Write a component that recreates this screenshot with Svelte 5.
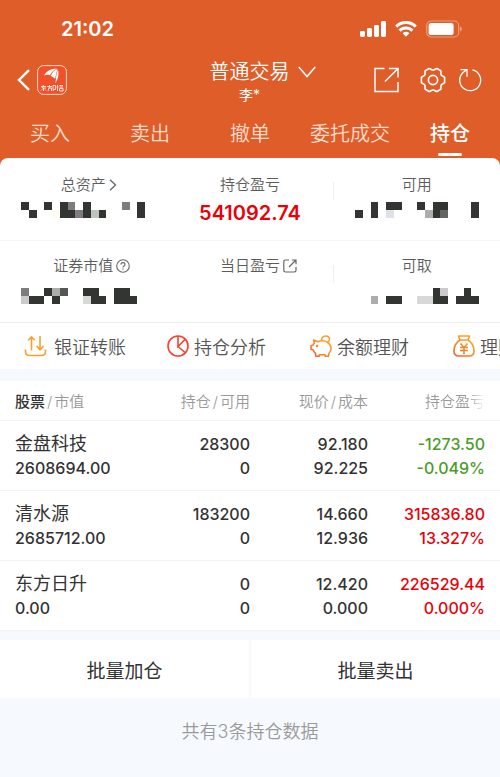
<script lang="ts">
  type Cell = [col: number, row: number, color: string];

  type Holding = {
    name: string;
    value: string;
    amount: string;
    usable: string;
    price: string;
    cost: string;
    profit: string;
    percent: string;
  };

  const D = "#323532";

  const masks: Record<string, Cell[]> = {
    total: [
      [0, 0, D], [3, 0, D], [5, 0, D], [6, 0, "#7f7c80"], [8, 0, D], [13, 0, "#7f7c80"], [15, 0, D],
      [1, 1, D], [4, 1, "#fffaf2"], [5, 1, D], [6, 1, D], [7, 1, "#7f7c80"], [8, 1, D],
      [9, 1, "#bcc4bd"], [10, 1, D], [15, 1, D],
    ],
    usable: [
      [2, 0, D], [4, 0, D], [5, 0, D], [8, 0, D], [10, 0, D], [11, 0, D], [15, 0, D],
      [0, 1, D], [2, 1, D], [4, 1, "#dde2e7"], [9, 1, "#adadad"], [10, 1, D], [11, 1, "#636563"], [15, 1, D],
    ],
    market: [
      [0, 0, "#7f7c80"], [3, 0, D], [4, 0, "#adadad"], [5, 0, "#555755"], [8, 0, D], [9, 0, D],
      [12, 0, D], [13, 0, D],
      [0, 1, "#cdcace"], [1, 1, D], [2, 1, D], [4, 1, D], [8, 1, "#d8d8d8"], [9, 1, D], [10, 1, D],
      [12, 1, D], [13, 1, D], [14, 1, D],
    ],
    cash: [
      [10, 0, D], [11, 0, "#cdcace"], [14, 0, D],
      [2, 1, "#adadad"], [4, 1, D], [5, 1, D], [8, 1, "#d8d8d8"], [9, 1, "#d8d8d8"], [10, 1, D],
      [11, 1, D], [13, 1, D], [14, 1, D], [15, 1, D],
    ],
  };

  const tabs = ["买入", "卖出", "撤单", "委托成交", "持仓"];
  let active = $state("持仓");

  const holdings: Holding[] = [
    { name: "金盘科技", value: "2608694.00", amount: "28300", usable: "0", price: "92.180", cost: "92.225", profit: "-1273.50", percent: "-0.049%" },
    { name: "清水源", value: "2685712.00", amount: "183200", usable: "0", price: "14.660", cost: "12.936", profit: "315836.80", percent: "13.327%" },
    { name: "东方日升", value: "0.00", amount: "0", usable: "0", price: "12.420", cost: "0.000", profit: "226529.44", percent: "0.000%" },
  ];
</script>

{#snippet mask(cells: Cell[])}
  <svg class="mask" viewBox="0 0 16 2" preserveAspectRatio="none" shape-rendering="crispEdges" aria-hidden="true">
    {#each cells as [col, row, color]}
      <rect x={col} y={row} width="1" height="1" fill={color} />
    {/each}
  </svg>
{/snippet}

<div class="app">
  <header>
    <div class="status">
      <span class="time">21:02</span>
      <div class="signals">
        <svg width="26" height="16" viewBox="0 0 26 16" fill="#fff">
          <rect x="0" y="10" width="5" height="6" rx="1.4" />
          <rect x="7" y="7" width="5" height="9" rx="1.4" />
          <rect x="14" y="4" width="5" height="12" rx="1.4" />
          <rect x="21" y="0" width="5" height="16" rx="1.4" />
        </svg>
        <svg width="22" height="16" viewBox="0 0 22 16" fill="none" stroke="#fff" stroke-width="3">
          <path d="M1.2 5.6a14 14 0 0 1 19.6 0" />
          <path d="M4.600 9.600a9 9 0 0 1 12.800 0" />
          <path d="M7.6 12.2a4.9 4.9 0 0 1 6.8 0L11 15.8z" fill="#fff" stroke="none" />
        </svg>
        <svg width="36" height="18" viewBox="0 0 36 18">
          <rect x=".7" y="1" width="32" height="16" rx="4.5" fill="none" stroke="#fff" stroke-opacity=".4" stroke-width="1.2" />
          <rect x="2.6" y="3" width="25" height="12" rx="2.6" fill="#fff" />
          <path d="M34.2 6.5c2 .8 2 4.2 0 5z" fill="#fff" fill-opacity=".5" />
        </svg>
      </div>
    </div>

    <div class="titlebar">
      <div class="side">
        <button aria-label="返回">
          <svg width="13" height="22" viewBox="0 0 13 22" fill="none" stroke="#fff" stroke-width="2.4">
            <path d="M12 1.2 2 11l10 9.8" />
          </svg>
        </button>
        <svg width="30" height="30" viewBox="0 0 30 30">
          <rect x=".6" y=".6" width="28.8" height="28.8" rx="6" fill="#f0512b" stroke="#ffd9c9" stroke-width="1" />
          <g fill="#fff">
            <path d="M7 10.500C10 5.500 14 4 20 3.600c-3 1.600-5.500 3.800-7.200 6.600C10.500 9.600 9 9.700 7 10.500z" />
            <path d="M13.600 11C15.200 7.600 17.500 5 20.400 4c-.8 3-1.600 6.300-2.300 10-1-1.400-2.600-2.500-4.500-3z" />
            <path d="M18.900 15c.2-4 .8-7.500 2-10.600 1.200 4.300.7 9.300-2.900 14 .5-1.300.8-2.200.9-3.400z" />
          </g>
          <g stroke="#ffe4da" stroke-width="1" fill="none">
            <path d="M4 21.500h5M6.500 20l-1.500 3h4M6.500 23v3M5 24.500l-1 1M8 24.500l1 1" />
            <path d="M10 21.500h5M12.500 20v1.500L11 26M12 23h2.500v3" />
            <path d="M16 20.500h2.500v4H16zM16 26l1-2M20.500 20v6M19.500 22h2" />
            <path d="M22.500 20.500H26M22.500 22H26M22.500 23.500H26v2.500h-3.500z" />
          </g>
        </svg>
      </div>

      <button class="account">
        <span class="name">
          普通交易
          <svg width="18" height="12" viewBox="0 0 18 12" fill="none" stroke="#fff" stroke-width="1.5">
            <path d="m.8 1 8.200 9.500L17.200 1" />
          </svg>
        </span>
        <span class="user">李*</span>
      </button>

      <div class="side tools">
        <button aria-label="分享">
          <svg width="26" height="26" viewBox="0 0 26 26" fill="none" stroke="#fff" stroke-width="1.5">
            <path d="M10.500 1.500H1v23h23V15M15 1.500h9v9M24 1.500 11 14.500" />
          </svg>
        </button>
        <button class="gear" aria-label="设置">
          <svg width="26" height="26" viewBox="0 0 26 26" fill="none" stroke="#fff" stroke-width="1.6" stroke-linejoin="round">
            <path d="M9 1.500c1.600 0 2.200 1.500 4 1.500s2.400-1.500 4-1.500l3.700 2.200c.8 1.400-.3 2.600.5 4.200.9 1.500 2.600 1.200 3.400 2.600v5c-.8 1.400-2.500 1.100-3.400 2.600-.8 1.600.3 2.800-.5 4.200L17 24.500c-1.600 0-2.200-1.500-4-1.500s-2.400 1.500-4 1.500l-3.700-2.200c-.8-1.400.3-2.600-.5-4.200-.9-1.500-2.600-1.200-3.400-2.600v-5c.8-1.400 2.500-1.100 3.400-2.600.8-1.600-.3-2.800.5-4.200z" />
            <circle cx="13" cy="13" r="4.600" />
          </svg>
        </button>
        <button aria-label="刷新">
          <svg width="24" height="24" viewBox="0 0 24 24" fill="none" stroke="#fff" stroke-width="1.300">
            <path d="M14.500 1.900A10.500 10.500 0 1 1 5 4.500L8.500 1.900M2.500 1.700h6.500v7" />
          </svg>
        </button>
      </div>
    </div>

    <nav>
      {#each tabs as tab}
        <button class="tab" class:active={active === tab} onclick={() => (active = tab)}>{tab}</button>
      {/each}
    </nav>
  </header>

  <section class="summary">
    <div class="row">
      <div class="item">
        <span class="label">
          总资产
          <svg class="hang" width="14" height="12" viewBox="0 0 14 12" fill="none" stroke="#666" stroke-width="1.300">
            <path d="m1 .8 5.500 5.200L1 11.200" />
          </svg>
        </span>
        {@render mask(masks.total)}
      </div>
      <div class="item">
        <span class="label">持仓盈亏</span>
        <strong>541092.74</strong>
      </div>
      <div class="item last">
        <span class="label">可用</span>
        {@render mask(masks.usable)}
      </div>
    </div>
    <div class="row">
      <div class="item">
        <span class="label">
          证券市值
          <svg class="hang" width="14" height="14" viewBox="0 0 14 14" fill="none" stroke="#666" stroke-width="1.100">
            <circle cx="7" cy="7" r="6.300" />
            <path d="M5 5.500c0-2.600 4-2.500 4-.1C9 7 7 6.900 7 8.500M7 9.500v1.300" />
          </svg>
        </span>
        {@render mask(masks.market)}
      </div>
      <div class="item">
        <span class="label">
          当日盈亏
          <svg class="hang" width="14" height="14" viewBox="0 0 14 14" fill="none" stroke="#666" stroke-width="1.200">
            <path d="M6 1H2.500Q.8 1 .8 2.700v8.600q0 1.700 1.700 1.700h8.800q1.700 0 1.700-1.700V8M8.800 1H13v4.200M13 1 6 8" />
          </svg>
        </span>
      </div>
      <div class="item last">
        <span class="label">可取</span>
        {@render mask(masks.cash)}
      </div>
    </div>
  </section>

  <div class="actions">
    <button>
      <svg width="25" height="22" viewBox="0 0 25 22" fill="none" stroke="#fb9f2b" stroke-width="1.600">
        <path d="M1.500 14.500v2q0 4 4 4h12q4 0 4-4v-2M7.500 15.500V2M4 5.500l3.500-3.700 3.200 3.500M16 1v13.500M12.700 11l3.300 3.700 3.500-3.700" />
      </svg>
      银证转账
    </button>
    <button>
      <svg width="22" height="22" viewBox="0 0 22 22" fill="none" stroke="#f8412f" stroke-width="1.600">
        <circle cx="11" cy="11" r="10" />
        <path d="M11 1v10.500L18.500 4M11 11.500l7 6" />
      </svg>
      持仓分析
    </button>
    <button>
      <svg width="22" height="22" viewBox="0 0 22 22" fill="none" stroke="url(#warm)" stroke-width="1.600" stroke-linejoin="round">
        <defs>
          <linearGradient id="warm" x1="0" y1="22" x2="14" y2="6" gradientUnits="userSpaceOnUse">
            <stop offset="0" stop-color="#ef5a24" />
            <stop offset="1" stop-color="#fb9f2b" />
          </linearGradient>
        </defs>
        <path d="M3.500 5 8 6.800c2-1.200 7-1.600 9.500.5 4.500 3 4.500 8 1.500 11l-.6 3h-3l-.6-1.600H9.500L9 21.200H6l-.8-3.400c-1.200-.8-1.600-1.800-2-2.800L1 14.300v-3.500l2.200-.8c.3-1 .8-1.500 1.300-2z" />
        <path d="M11.500 5.500C11.500-.5 20-.2 19.500 4.500c-.2 1.500-1 2.400-2.200 3" />
        <circle cx="7" cy="11" r=".5" />
      </svg>
      余额理财
    </button>
    <button>
      <svg width="22" height="22" viewBox="0 0 22 22" fill="none" stroke="url(#warm)" stroke-width="1.600" stroke-linejoin="round">
        <path d="M5.500 1h11L15 5H7zM7 5C3 7.500 1 11.500 1 16q0 5 5 5h10q5 0 5-5c0-4.500-2-8.500-6-11" />
        <path d="m7.500 8.500 3.500 4 3.500-4M7 12.500h8M7 15.500h8M11 12.500V19" />
      </svg>
      理财
    </button>
  </div>

  <table>
    <thead>
      <tr>
        <th class="stock"><b>股票</b><i>/</i>市值</th>
        <th class="amount">持仓<i>/</i>可用</th>
        <th class="price">现价<i>/</i>成本</th>
        <th class="fade">持仓盈亏</th>
      </tr>
    </thead>
    <tbody>
      {#each holdings as h}
        <tr>
          <td class="stock"><span class="title">{h.name}</span><span>{h.value}</span></td>
          <td><span>{h.amount}</span><span>{h.usable}</span></td>
          <td><span>{h.price}</span><span>{h.cost}</span></td>
          <td class={h.profit.startsWith("-") ? "down" : "up"}><span>{h.profit}</span><span>{h.percent}</span></td>
        </tr>
      {/each}
    </tbody>
  </table>

  <div class="batch">
    <button>批量加仓</button>
    <button>批量卖出</button>
  </div>

  <p>共有{holdings.length}条持仓数据</p>
</div>

<style>
  :global(body) {
    background: #f6faff;
  }

  .app {
    overflow: hidden;
    color: #323232;
    font-family: Inter, "Noto Sans CJK SC", sans-serif;
    font-size: 16px;
  }

  button {
    padding: 0;
    border: 0;
    background: none;
    color: inherit;
    font: inherit;
    white-space: nowrap;
    cursor: pointer;
  }

  svg {
    display: block;
    flex: none;
  }

  header {
    padding-bottom: 8px;
    margin-bottom: -8px;
    background: #df5d29;
    color: #fff;
  }

  .status {
    display: flex;
    justify-content: space-between;
    align-items: center;
    box-sizing: border-box;
    height: 54px;
    padding: 4px 38px 0 61px;
  }

  .time {
    font-size: 20px;
    font-weight: 600;
  }

  .signals {
    display: flex;
    align-items: center;
    gap: 9px;
  }

  .titlebar {
    display: grid;
    grid-template-columns: 1fr auto 1fr;
    align-items: center;
    height: 52px;
    padding: 0 18px 0 17px;
  }

  .side {
    display: flex;
    align-items: center;
    gap: 7px;
  }

  .tools {
    justify-content: flex-end;
    gap: 12px;
  }

  .gear {
    padding-left: 8px;
  }

  .account {
    display: flex;
    flex-direction: column;
    align-items: center;
    padding-top: 6px;
    font-weight: 350;
  }

  .name {
    display: flex;
    align-items: center;
    gap: 8px;
    margin-right: -26px;
    font-size: 20px;
    line-height: 24px;
  }

  .user {
    font-size: 14px;
    font-weight: 400;
    line-height: 22px;
  }

  nav {
    display: grid;
    grid-template-columns: repeat(5, 1fr);
    height: 52px;
  }

  .tab {
    position: relative;
    color: #ffdccb;
    font-size: 20px;
    font-weight: 350;
  }

  .tab.active {
    color: #fff;
    font-weight: 500;
  }

  .tab.active::after {
    content: "";
    position: absolute;
    bottom: 2px;
    left: 50%;
    width: 24px;
    height: 3px;
    border-radius: 2px;
    background: #fff;
    translate: -50% 0;
  }

  .summary {
    border-radius: 8px 8px 0 0;
    background: #fff;
  }

  .row {
    display: grid;
    grid-template-columns: repeat(3, 1fr);
    box-sizing: border-box;
    height: 82px;
  }

  .row + .row {
    border-top: 1px solid #f5f5f5;
  }

  .item {
    position: relative;
    display: flex;
    flex-direction: column;
    align-items: center;
    gap: 6px;
    padding-top: 16px;
  }

  .row + .row .item {
    gap: 11px;
    padding-top: 14px;
  }

  .last::before {
    content: "";
    position: absolute;
    top: 24px;
    left: 0;
    width: 1px;
    height: 18px;
    background: #eee;
  }

  .label {
    display: flex;
    align-items: center;
    gap: 3px;
    color: #5c5c5c;
    font-size: 15px;
    font-weight: 350;
    line-height: 22px;
  }

  .hang {
    margin-right: -17px;
  }

  .mask {
    width: 124px;
    height: 16px;
  }

  strong {
    color: #e90008;
    font-size: 20px;
    font-weight: 600;
    line-height: 22px;
  }

  .actions {
    display: grid;
    grid-auto-flow: column;
    grid-auto-columns: 143px;
    box-sizing: border-box;
    height: 47px;
    padding-left: 24px;
    border-top: 1px solid #eee;
    background: #fff;
    overflow: hidden;
  }

  .actions button {
    display: flex;
    align-items: center;
    gap: 5px;
    color: #555;
    font-size: 18px;
    font-weight: 350;
  }

  table {
    width: 100%;
    margin-top: 12px;
    border-collapse: collapse;
    table-layout: fixed;
    background: #fff;
    text-align: right;
  }

  th {
    height: 39px;
    padding: 0;
    color: #999;
    font-size: 15px;
    font-weight: 350;
    white-space: nowrap;
  }

  th b {
    color: #323232;
    font-weight: 500;
  }

  th i {
    margin: 0 2px;
    font-style: normal;
  }

  .stock {
    box-sizing: border-box;
    width: 27%;
    padding-left: 15px;
    text-align: left;
  }

  .amount {
    width: 23%;
  }

  .price {
    width: 23.6%;
  }

  th:last-child,
  td:last-child {
    padding-right: 15px;
  }

  .fade {
    -webkit-mask-image: linear-gradient(to left, transparent 15px, #000 32px);
    mask-image: linear-gradient(to left, transparent 15px, #000 32px);
  }

  td {
    height: 69px;
    padding: 0;
    border-top: 1px solid #f3f3f3;
    font-weight: 500;
    line-height: 24px;
  }

  tbody tr:last-child td {
    border-bottom: 1px solid #f3f3f3;
  }

  td span {
    display: block;
  }

  .title {
    font-size: 18px;
    font-weight: 400;
  }

  .up {
    color: #e90008;
  }

  .down {
    color: #4c9a2a;
  }

  .batch {
    display: grid;
    grid-template-columns: 1fr 1fr;
    gap: 2px;
    margin-top: 9px;
  }

  .batch button {
    height: 58px;
    background: #fff;
    font-size: 19px;
  }

  p {
    margin: 20px 0;
    color: #999;
    font-size: 18px;
    font-weight: 350;
    line-height: 28px;
    text-align: center;
  }
</style>
